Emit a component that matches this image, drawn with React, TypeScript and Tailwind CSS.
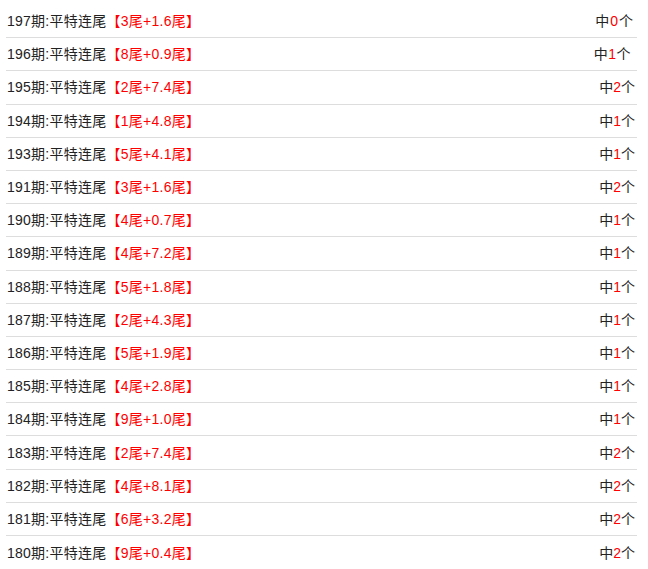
import React from "react";

const rows: [string, string, string, string][] = [
  ["197", "3", "1.6", "0"],
  ["196", "8", "0.9", "1"],
  ["195", "2", "7.4", "2"],
  ["194", "1", "4.8", "1"],
  ["193", "5", "4.1", "1"],
  ["191", "3", "1.6", "2"],
  ["190", "4", "0.7", "1"],
  ["189", "4", "7.2", "1"],
  ["188", "5", "1.8", "1"],
  ["187", "2", "4.3", "1"],
  ["186", "5", "1.9", "1"],
  ["185", "4", "2.8", "1"],
  ["184", "9", "1.0", "1"],
  ["183", "2", "7.4", "2"],
  ["182", "4", "8.1", "2"],
  ["181", "6", "3.2", "2"],
  ["180", "9", "0.4", "2"],
];

export default function App() {
  return (
    <div
      className="w-[648px] h-[569px] overflow-hidden bg-white pl-[6px] pt-[5px] text-[14px] text-[#222]"
      style={{ fontFamily: '"Liberation Sans", "Noto Sans CJK SC", sans-serif' }}
    >
      <ul className="w-[631px]">
        {rows.map(([p, a, b, n], i) => (
          <li
            key={p}
            className="flex h-[33.2px] items-center justify-between border-b border-[#dddddd] pl-px last:border-b-0"
          >
            <span className="leading-none tracking-[0.25px]">
              {p}期:平特连尾
              <span className="text-[#ff0000]">
                【{a}尾+{b}尾】
              </span>
            </span>
            <span
              className={
                i === 0
                  ? "leading-none pr-[3px] tracking-[1px]"
                  : i === 1
                  ? "leading-none pr-[6px] tracking-[0.5px]"
                  : "leading-none pr-[2px]"
              }
            >
              中<span className="text-[#ff0000]">{n}</span>个
            </span>
          </li>
        ))}
      </ul>
    </div>
  );
}
